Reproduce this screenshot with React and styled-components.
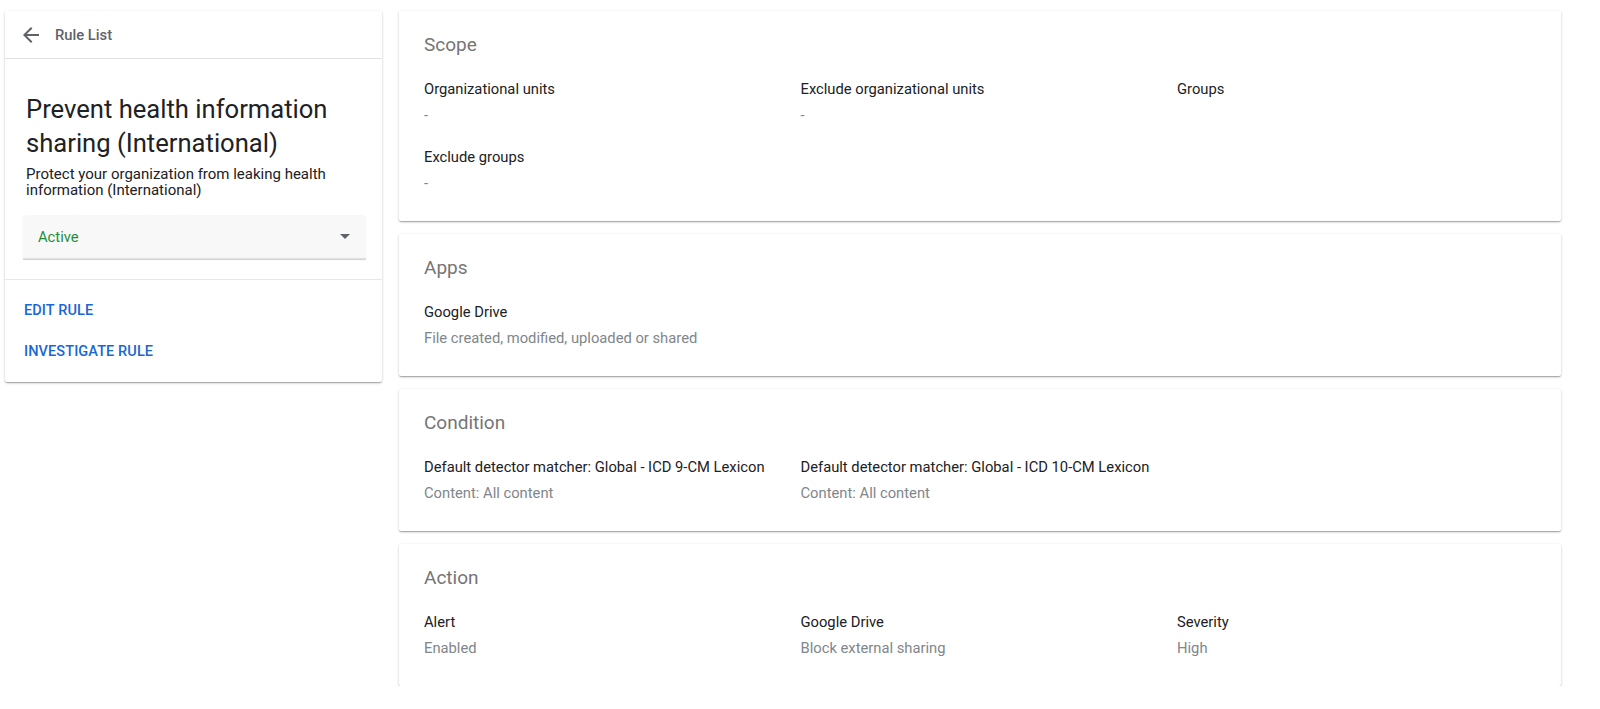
import React from 'react';
import styled, { createGlobalStyle } from 'styled-components';

const GlobalStyle = createGlobalStyle`
  body {
    margin: 0;
    background: #fff;
    font-family: Roboto, "Liberation Sans", Arial, sans-serif;
    color: #202124;
  }
`;

const Page = styled.div`
  display: flex;
  align-items: flex-start;
  gap: 17px;
  padding: 11px 0 0 5px;
`;

const Card = styled.div`
  background: #fff;
  border-radius: 2px;
  box-shadow: 0 1px 3px rgba(0, 0, 0, 0.2), 0 1px 1px rgba(0, 0, 0, 0.14),
    0 2px 1px -1px rgba(0, 0, 0, 0.12);
`;

const SideCard = styled(Card)`
  width: 377px;
  flex-shrink: 0;
`;

const SideHeader = styled.div`
  height: 48px;
  display: flex;
  align-items: center;
  padding-left: 14px;
  border-bottom: 1px solid #e0e0e0;
  box-sizing: border-box;
  color: #5f6368;
  font-size: 14.75px;
  font-weight: 500;
  gap: 12px;
`;

const SideBody = styled.div`
  padding: 33px 16px 20px 18px;
  border-bottom: 1px solid #e8e8e8;
`;

const Title = styled.h1`
  margin: 0 0 0 3px;
  font-size: 25.6px;
  line-height: 34px;
  font-weight: 400;
  color: #202124;
`;

const Description = styled.p`
  margin: 6px 0 0 3px;
  font-size: 15px;
  line-height: 16px;
  color: #202124;
`;

const Select = styled.div`
  margin-top: 17px;
  height: 44px;
  background: #f8f8f8;
  border-radius: 4px 4px 0 0;
  box-shadow: 0 1px 1px rgba(0, 0, 0, 0.18);
  border-bottom: 1px solid #e0e0e0;
  box-sizing: border-box;
  display: flex;
  align-items: center;
  justify-content: space-between;
  padding: 0 16px 0 15px;
  font-size: 14.75px;
  color: #1e8e3e;
`;

const Caret = styled.span`
  width: 0;
  height: 0;
  border-left: 5px solid transparent;
  border-right: 5px solid transparent;
  border-top: 5px solid #5f6368;
`;

const Actions = styled.div`
  display: flex;
  flex-direction: column;
  gap: 5px;
  padding: 12px 0 13px 14px;
`;

const LinkButton = styled.button`
  height: 36px;
  border: 0;
  background: none;
  padding: 0 0 0 5px;
  text-align: left;
  font-family: inherit;
  font-size: 14.5px;
  font-weight: 500;
  letter-spacing: 0.1px;
  color: #1967d2;
  cursor: pointer;
`;

const Main = styled.div`
  width: 1162px;
  display: flex;
  flex-direction: column;
  gap: 13px;
`;

const Section = styled(Card)`
  padding: 22px 25px 28px;
`;

const SectionTitle = styled.h2`
  margin: 0 0 22px;
  font-size: 19px;
  line-height: 24px;
  font-weight: 400;
  color: #757575;
`;

const FieldGrid = styled.div`
  display: grid;
  grid-template-columns: repeat(3, 376.5px);
  row-gap: 22px;
`;

const Label = styled.div`
  font-size: 14.75px;
  line-height: 20px;
  color: #202124;
`;

const Value = styled.div`
  margin-top: 6px;
  font-size: 14.75px;
  line-height: 20px;
  color: #80868b;
`;

const ArrowBack = () => (
  <svg width="24" height="24" viewBox="0 0 24 24" fill="#5f6368">
    <path d="M20 11H7.83l5.59-5.59L12 4l-8 8 8 8 1.41-1.41L7.83 13H20v-2z" />
  </svg>
);

const sections = [
  {
    title: 'Scope',
    fields: [
      { label: 'Organizational units', value: '-' },
      { label: 'Exclude organizational units', value: '-' },
      { label: 'Groups', value: '' },
      { label: 'Exclude groups', value: '-' },
    ],
  },
  {
    title: 'Apps',
    fields: [{ label: 'Google Drive', value: 'File created, modified, uploaded or shared' }],
  },
  {
    title: 'Condition',
    fields: [
      { label: 'Default detector matcher: Global - ICD 9-CM Lexicon', value: 'Content: All content' },
      { label: 'Default detector matcher: Global - ICD 10-CM Lexicon', value: 'Content: All content' },
    ],
  },
  {
    title: 'Action',
    fields: [
      { label: 'Alert', value: 'Enabled' },
      { label: 'Google Drive', value: 'Block external sharing' },
      { label: 'Severity', value: 'High' },
    ],
  },
];

const App = () => (
  <>
    <GlobalStyle />
    <Page>
      <SideCard>
        <SideHeader>
          <ArrowBack />
          Rule List
        </SideHeader>
        <SideBody>
          <Title>Prevent health information sharing (International)</Title>
          <Description>
            Protect your organization from leaking health information (International)
          </Description>
          <Select>
            Active
            <Caret />
          </Select>
        </SideBody>
        <Actions>
          <LinkButton>EDIT RULE</LinkButton>
          <LinkButton>INVESTIGATE RULE</LinkButton>
        </Actions>
      </SideCard>
      <Main>
        {sections.map((s) => (
          <Section key={s.title}>
            <SectionTitle>{s.title}</SectionTitle>
            <FieldGrid>
              {s.fields.map((f, i) => (
                <div key={i}>
                  <Label>{f.label}</Label>
                  {f.value && <Value>{f.value}</Value>}
                </div>
              ))}
            </FieldGrid>
          </Section>
        ))}
      </Main>
    </Page>
  </>
);

export default App;
